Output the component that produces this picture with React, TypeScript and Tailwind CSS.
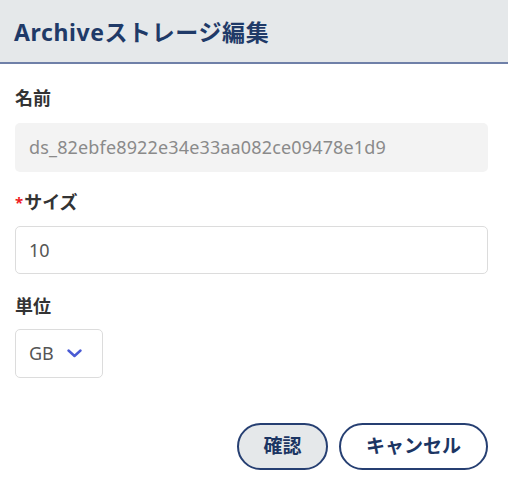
import React from 'react';

const FONT = '"Noto Sans", "Noto Sans CJK JP", sans-serif';

function Label({ text, required }: { text: string; required?: boolean }) {
  return (
    <div className="flex items-center h-6 text-[18px] font-bold leading-6 text-[#333333]">
      {required && <span className="text-[#ee1c25] text-[15px] mr-px">*</span>}
      <span>{text}</span>
    </div>
  );
}

export default function App() {
  return (
    <div className="w-[508px] h-[485px] bg-white overflow-hidden" style={{ fontFamily: FONT }}>
      {/* Header */}
      <div className="h-[64px] flex items-center px-[14px] bg-[#e5e8ea] border-b-2 border-[#6f80a8]">
        <h1 className="text-[23px] font-bold text-[#1f3a68] tracking-[0.6px] pt-[2px]">
          Archiveストレージ編集
        </h1>
      </div>

      {/* Body */}
      <div className="px-[15px] pr-[20px]">
        <div className="mt-[22px]">
          <Label text="名前" />
          <div className="mt-[13px] h-[49px] rounded-[5px] bg-[#f3f3f3] flex items-center px-[14px] text-[18px] tracking-[0.15px] text-[#8a8a8a]">
            ds_82ebfe8922e34e33aa082ce09478e1d9
          </div>
        </div>

        <div className="mt-[18px]">
          <Label text="サイズ" required />
          <div className="mt-[12px] h-[48px] rounded-[5px] border border-[#dcdcdc] flex items-center px-[13px] text-[18px] text-[#555555]">
            10
          </div>
        </div>

        <div className="mt-[20px]">
          <Label text="単位" />
          <div className="mt-[11px] w-[88px] h-[49px] rounded-[5px] border border-[#dcdcdc] flex items-center px-[13px] gap-[13px] text-[18px] text-[#555555]">
            <span>GB</span>
            <svg width="15" height="9" viewBox="0 0 15 9" fill="none">
              <path d="M1.5 1.5 L7.5 7 L13.5 1.5" stroke="#4a5bd4" strokeWidth="2.4" strokeLinecap="round" strokeLinejoin="round" />
            </svg>
          </div>
        </div>

        <div className="mt-[45px] flex justify-end gap-[11px]">
          <button className="w-[91px] h-[47px] rounded-full border-2 border-[#263f72] bg-[#e5e8ea] text-[19px] font-bold text-[#1c3563]">
            確認
          </button>
          <button className="w-[149px] h-[47px] rounded-full border-2 border-[#263f72] bg-white text-[19px] font-bold text-[#1c3563]">
            キャンセル
          </button>
        </div>
      </div>
    </div>
  );
}
